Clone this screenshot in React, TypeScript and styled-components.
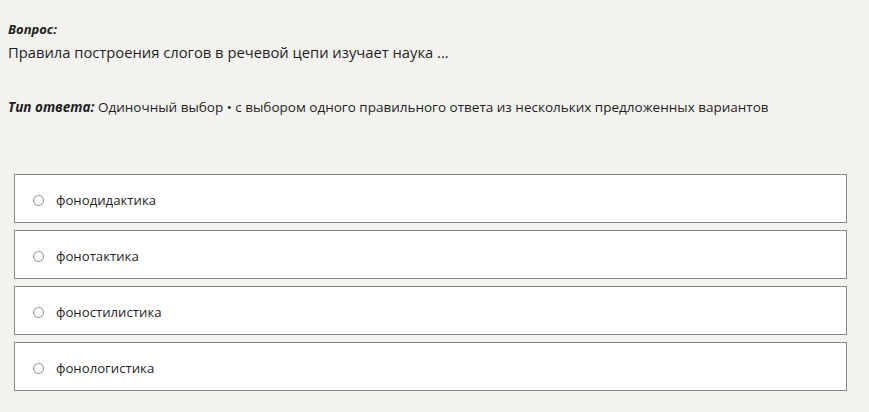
import React from "react";
import styled, { createGlobalStyle } from "styled-components";

const GlobalStyle = createGlobalStyle`
  html, body {
    margin: 0;
    padding: 0;
    background: #f3f2ef;
  }
  body {
    font-family: "Open Sans", "Noto Sans", sans-serif;
    color: #1f1f1f;
  }
`;

const Page = styled.div`
  width: 869px;
  height: 412px;
  padding: 20px 0 0 8px;
  box-sizing: border-box;
`;

const Label = styled.div`
  font-size: 13px;
  font-weight: 700;
  font-style: italic;
  line-height: 18px;
`;

const Question = styled.div`
  font-size: 14.75px;
  line-height: 28px;
`;

const TypeLine = styled.div`
  margin-top: 32px;
  font-size: 13.5px;
  line-height: 18px;

  b {
    font-style: italic;
    font-weight: 700;
  }
`;

const Options = styled.ul`
  list-style: none;
  margin: 58px 0 0 6px;
  padding: 0;
  width: 833px;
  display: flex;
  flex-direction: column;
  gap: 7px;
`;

const Option = styled.li`
  height: 49px;
  box-sizing: border-box;
  border: 1px solid #888888;
  background: #ffffff;
  display: flex;
  align-items: center;
  padding: 3px 0 0 18px;
  font-size: 13.2px;
`;

const Radio = styled.span`
  width: 9px;
  height: 9px;
  border: 1px solid #8a8a8a;
  border-radius: 50%;
  margin-right: 12px;
  margin-top: 1px;
`;

const options = ["фонодидактика", "фонотактика", "фоностилистика", "фонологистика"];

const App: React.FC = () => (
  <>
    <GlobalStyle />
    <Page>
      <Label>Вопрос:</Label>
      <Question>Правила построения слогов в речевой цепи изучает наука ...</Question>
      <TypeLine>
        <b>Тип ответа:</b> Одиночный выбор • с выбором одного правильного ответа из нескольких предложенных вариантов
      </TypeLine>
      <Options>
        {options.map((o) => (
          <Option key={o}>
            <Radio />
            {o}
          </Option>
        ))}
      </Options>
    </Page>
  </>
);

export default App;
